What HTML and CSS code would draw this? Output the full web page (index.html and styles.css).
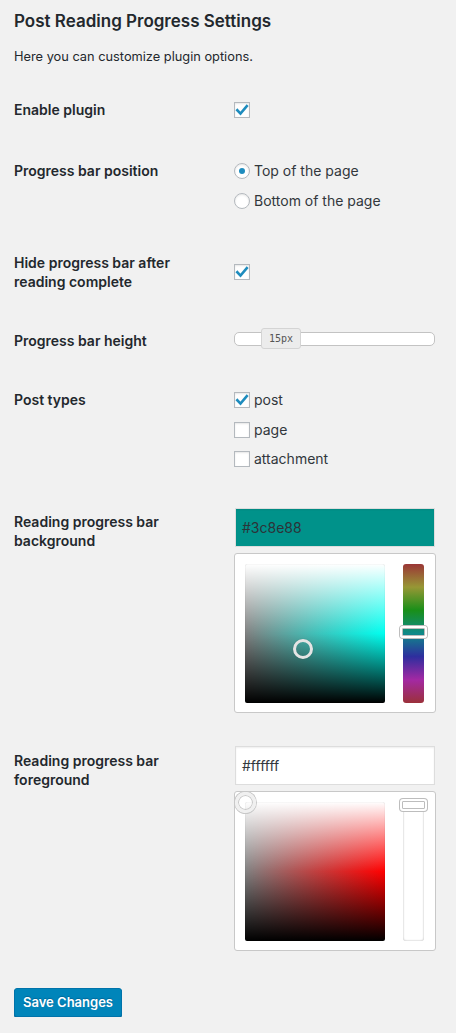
FILE: index.html
```html
<!DOCTYPE html>
<html>
<head>
<meta charset="utf-8">
<link rel="stylesheet" href="styles.css">
</head>
<body>
<div class="wrap">
  <h1 class="title">Post Reading Progress Settings</h1>
  <p class="desc">Here you can customize plugin options.</p>

  <div class="row r-enable">
    <div class="label">Enable plugin</div>
    <div class="field">
      <span class="cb cb-top2"><svg viewBox="0 0 16 16" width="16" height="16"><polyline points="3.3,8.2 6.5,11.6 12.8,4.2" /></svg></span>
    </div>
  </div>

  <div class="row r-position">
    <div class="label">Progress bar position</div>
    <div class="field options opt-radio">
      <div class="opt"><span class="radio on"></span><span class="opt-text">Top of the page</span></div>
      <div class="opt"><span class="radio"></span><span class="opt-text">Bottom of the page</span></div>
    </div>
  </div>

  <div class="row r-hide">
    <div class="label">Hide progress bar after<br>reading complete</div>
    <div class="field">
      <span class="cb cb-top11"><svg viewBox="0 0 16 16" width="16" height="16"><polyline points="3.3,8.2 6.5,11.6 12.8,4.2" /></svg></span>
    </div>
  </div>

  <div class="row r-height">
    <div class="label label-top3">Progress bar height</div>
    <div class="field">
      <div class="slider">
        <div class="slider-bar"></div>
        <div class="slider-handle">15px</div>
      </div>
    </div>
  </div>

  <div class="row r-types">
    <div class="label">Post types</div>
    <div class="field options opt-check">
      <div class="opt"><span class="cb"><svg viewBox="0 0 16 16" width="16" height="16"><polyline points="3.3,8.2 6.5,11.6 12.8,4.2" /></svg></span><span class="opt-text">post</span></div>
      <div class="opt"><span class="cb"></span><span class="opt-text">page</span></div>
      <div class="opt"><span class="cb"></span><span class="opt-text">attachment</span></div>
    </div>
  </div>

  <div class="row r-bg">
    <div class="label label-top4">Reading progress bar<br>background</div>
    <div class="field">
      <div class="color-input teal">#3c8e88</div>
      <div class="picker">
        <div class="square sq-teal"><span class="dot dot-teal"></span></div>
        <div class="strip strip-hue"><span class="handle handle-teal"></span></div>
      </div>
    </div>
  </div>

  <div class="row r-fg">
    <div class="label label-top5">Reading progress bar<br>foreground</div>
    <div class="field">
      <div class="color-input">#ffffff</div>
      <div class="picker">
        <div class="square sq-red"><span class="dot dot-white"></span></div>
        <div class="strip strip-white"><span class="handle handle-white"></span></div>
      </div>
    </div>
  </div>

  <button class="save">Save Changes</button>
</div>
</body>
</html>
```
FILE: styles.css
```css
html, body {
  margin: 0;
  padding: 0;
  background: #f1f1f1;
}
body {
  font-family: "Inter", "Liberation Sans", sans-serif;
  color: #23282d;
}
.wrap {
  padding: 10px 14px 0;
}
.title {
  margin: 0;
  font-size: 17px;
  line-height: 22px;
  font-weight: 600;
}
.desc {
  margin: 16px 0 0;
  font-size: 12.8px;
  line-height: 18px;
}
.row {
  display: flex;
  align-items: flex-start;
}
.label {
  width: 220px;
  flex: none;
  font-size: 14px;
  line-height: 19px;
  font-weight: 600;
}
.label-top3 { margin-top: 3px; }
.label-top4 { margin-top: 4px; }
.label-top5 { margin-top: 5px; }
.field {
  flex: 1;
}
.r-enable { margin-top: 34px; }
.r-position { margin-top: 42px; }
.r-hide { margin-top: 42px; }
.r-height { margin-top: 37px; }
.r-types { margin-top: 40px; }
.r-bg { margin-top: 39px; }
.r-fg { margin-top: 33px; }

.cb {
  display: block;
  box-sizing: border-box;
  width: 16px;
  height: 16px;
  background: #fff;
  border: 1px solid #b4b9be;
  box-shadow: inset 0 1px 2px rgba(0,0,0,0.1);
  position: relative;
}
.cb svg {
  position: absolute;
  left: -1px;
  top: -1px;
  fill: none;
  stroke: #1e8cbe;
  stroke-width: 2.6;
  stroke-linecap: square;
  stroke-linejoin: miter;
}
.cb-top2 { margin-top: 2px; }
.cb-top11 { margin-top: 11px; }

.options {
  display: flex;
  flex-direction: column;
}
.opt-radio { gap: 10px; }
.opt-check { gap: 9.5px; }
.opt {
  display: flex;
  align-items: center;
  height: 20px;
  font-size: 14px;
}
.opt .cb, .opt .radio {
  flex: none;
  margin-right: 4px;
}
.opt-text {
  line-height: 20px;
  color: #32373c;
}
.radio {
  display: block;
  box-sizing: border-box;
  width: 16px;
  height: 16px;
  border-radius: 50%;
  background: #fff;
  border: 1px solid #b4b9be;
  box-shadow: inset 0 1px 2px rgba(0,0,0,0.1);
  position: relative;
}
.radio.on::after {
  content: "";
  position: absolute;
  left: 4px;
  top: 4px;
  width: 6px;
  height: 6px;
  border-radius: 50%;
  background: #1e8cbe;
}

.slider {
  position: relative;
  box-sizing: border-box;
  width: 201px;
  height: 21px;
  padding-top: 4px;
}
.slider-bar {
  box-sizing: border-box;
  height: 14px;
  background: #fff;
  border: 1px solid #c3c3c3;
  border-radius: 5px;
}
.slider-handle {
  position: absolute;
  left: 27px;
  top: 0;
  box-sizing: border-box;
  width: 40px;
  height: 21px;
  background: #ececec;
  border: 1px solid #d4d4d4;
  border-radius: 3px;
  font-family: "DejaVu Sans Mono", monospace;
  font-size: 10px;
  line-height: 19px;
  text-align: center;
  color: #555;
}

.color-input {
  box-sizing: border-box;
  margin-left: 1px;
  width: 200px;
  height: 39px;
  border: 1px solid #ddd;
  box-shadow: inset 0 1px 2px rgba(0,0,0,0.07);
  background: #fff;
  padding: 0 6px;
  font-size: 14px;
  line-height: 37px;
  color: #32373c;
}
.color-input.teal {
  background: #00928a;
  color: #2c3338;
}
.picker {
  box-sizing: border-box;
  margin-top: 6px;
  width: 202px;
  height: 160px;
  border: 1px solid #c8c8c8;
  border-radius: 3px;
  background: #fff;
  padding: 10px;
  display: flex;
  gap: 18px;
}
.square {
  position: relative;
  width: 140px;
  height: 139px;
  border-radius: 2px;
  box-shadow: inset 0 0 1px rgba(0,0,0,0.3);
}
.sq-teal {
  background:
    linear-gradient(to bottom, #fff 0%, rgba(255,255,255,0) 50%, rgba(0,0,0,0) 50%, #000 100%),
    linear-gradient(to right, #808080, #00fff0);
}
.sq-red {
  background:
    linear-gradient(to bottom, #fff 0%, rgba(255,255,255,0) 50%, rgba(0,0,0,0) 50%, #000 100%),
    linear-gradient(to right, #808080, #ff0000);
}
.dot {
  position: absolute;
  box-sizing: border-box;
  border-radius: 50%;
}
.dot-teal {
  left: 48px;
  top: 75px;
  width: 20px;
  height: 20px;
  border: 3px solid #e4e4e4;
  box-shadow: 0 0 1px rgba(0,0,0,0.3);
}
.dot-white {
  left: -10px;
  top: -10px;
  width: 21px;
  height: 21px;
  border: 3px solid #f0f0f0;
  box-shadow: 0 0 0 1px #c8c8c8, inset 0 0 0 1px #c8c8c8;
}
.strip {
  position: relative;
  width: 21px;
  height: 139px;
  border-radius: 3px;
}
.strip-hue {
  background: linear-gradient(to bottom,
    hsl(0, 48%, 41%) 0%,
    hsl(60, 48%, 40%) 16.6%,
    hsl(120, 70%, 33%) 33.3%,
    hsl(180, 80%, 30%) 50%,
    hsl(240, 55%, 40%) 66.6%,
    hsl(300, 60%, 40%) 83.3%,
    hsl(355, 52%, 40%) 100%);
}
.strip-white {
  background: #fff;
  box-shadow: inset 0 0 2px rgba(0,0,0,0.35);
}
.handle {
  position: absolute;
  left: -3px;
  box-sizing: border-box;
  width: 27px;
  height: 12px;
  border: 2px solid #fff;
  border-radius: 3px;
  box-shadow: 0 0 0 1px #bdbdbd, inset 0 0 0 1px #bdbdbd;
}
.handle-teal { top: 62px; }
.handle-white { top: -3px; background: #fff; }

.save {
  display: block;
  margin-top: 37px;
  height: 29px;
  width: 108px;
  padding: 0;
  background: #0085ba;
  border: 1px solid #0073aa;
  border-radius: 3px;
  box-shadow: 0 1px 0 #006799;
  color: #fff;
  font-family: "Inter", "Liberation Sans", sans-serif;
  font-size: 13px;
  font-weight: 600;
  line-height: 27px;
  text-shadow: 0 -1px 1px #006799;
}
```
